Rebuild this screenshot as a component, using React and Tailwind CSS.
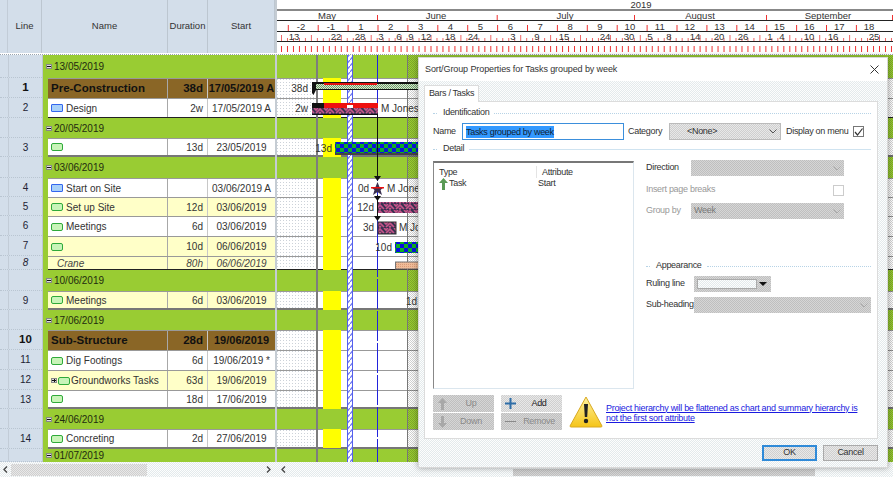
const dither = 'bg-[conic-gradient(#cfcfcf_25%,#e8e8e8_0_50%,#cfcfcf_0_75%,#e8e8e8_0)] bg-[length:2px_2px]';
const ditherLight = 'bg-[conic-gradient(#e3eaec_25%,#fdfdfd_0_50%,#e3eaec_0_75%,#fdfdfd_0)] bg-[length:2px_2px]';
const ditherDark = 'bg-[conic-gradient(#bfbfbf_25%,#d6d6d6_0_50%,#bfbfbf_0_75%,#d6d6d6_0)] bg-[length:2px_2px]';
const dots = 'bg-[conic-gradient(at_1px_1px,transparent_75%,#ccd2d9_0)] bg-[length:3px_3px]';

const rows = [
  { group: '13/05/2019', h: 'h-[23px]' },
  { n: 1, name: 'Pre-Construction', dur: '38d', start: '17/05/2019 A', kind: 'summary', h: 'h-[20px]' },
  { n: 2, name: 'Design', icon: 'blue', dur: '2w', start: '17/05/2019 A', h: 'h-[20px]', end: 'dark' },
  { group: '20/05/2019', h: 'h-[20px]' },
  { n: 3, icon: 'green', dur: '13d', start: '23/05/2019', h: 'h-[19px]', end: 'gray' },
  { group: '03/06/2019', h: 'h-[21px]' },
  { n: 4, name: 'Start on Site', icon: 'blue', dur: '', start: '03/06/2019 A', h: 'h-[19px]' },
  { n: 5, name: 'Set up Site', icon: 'green', dur: '12d', start: '03/06/2019', kind: 'yellow', h: 'h-[19px]' },
  { n: 6, name: 'Meetings', icon: 'green', dur: '6d', start: '03/06/2019', h: 'h-[20px]' },
  { n: 7, icon: 'green', dur: '10d', start: '06/06/2019', kind: 'yellow', h: 'h-[20px]' },
  { n: 8, name: 'Crane', dur: '80h', start: '06/06/2019', kind: 'resource', h: 'h-[14px]', end: 'dark' },
  { group: '10/06/2019', h: 'h-[21px]' },
  { n: 9, name: 'Meetings', icon: 'green', dur: '6d', start: '03/06/2019', kind: 'yellow', h: 'h-[19px]', end: 'gray' },
  { group: '17/06/2019', h: 'h-[20px]' },
  { n: 10, name: 'Sub-Structure', dur: '28d', start: '19/06/2019', kind: 'summary', h: 'h-[20px]' },
  { n: 11, name: 'Dig Footings', icon: 'green', dur: '6d', start: '19/06/2019 *', h: 'h-[20px]' },
  { n: 12, name: 'Groundworks Tasks', icon: 'green', expand: true, dur: '63d', start: '19/06/2019', kind: 'yellow', h: 'h-[20px]' },
  { n: 13, icon: 'green', dur: '18d', start: '17/06/2019', h: 'h-[19px]', end: 'gray' },
  { group: '24/06/2019', h: 'h-[20px]' },
  { n: 14, name: 'Concreting', icon: 'green', dur: '2d', start: '27/06/2019', h: 'h-[20px]', end: 'gray' },
  { group: '01/07/2019', h: 'h-[13px]' },
];

const rowEnd = {
  dark: 'border-b border-b-[#222]',
  gray: 'border-b-2 border-b-[#777]',
};

const rowBg = {
  summary: 'bg-[#8a6626] font-bold text-[#111]',
  yellow: 'bg-[#ffffc8] text-[#333]',
  resource: 'bg-[#ffffc8] italic text-[#444]',
};

const months = [['May', 327], ['June', 436], ['July', 565], ['August', 700], ['September', 828]];
const monthTicks = [377, 496.7, 634, 766, 892];
const weeks = ['-2', '-1', '1', '2', '3', '4', '5', '6', '7', '8', '9', '10', '11', '12', '13', '14', '15', '16', '17', '18'];
const days = [
  ['13', 294], ['22', 336], ['28', 360], ['3', 381], ['6', 399], ['9', 411], ['12', 426], ['18', 450], ['24', 473],
  ['3', 513], ['9', 537], ['15', 564], ['24', 605], ['30', 629], ['5', 650], ['8', 669], ['14', 695], ['20', 719],
  ['26', 743], ['1', 770], ['4', 782], ['10', 809], ['16', 833], ['25', 874],
];
const fine = Array.from({ length: 103 }, (_, i) => 281 + i * 5.98);

const TaskIcon = ({ color }) => (
  <span className={color === 'blue'
    ? 'w-[12px] h-[8px] shrink-0 rounded-[1px] border border-[#3366ee] bg-[#a8d0f8]'
    : 'w-[12px] h-[8px] shrink-0 rounded-[2px] border border-[#2faa3a] bg-[#c8f4b8]'} />
);

const Box = ({ plus }) => (
  <span className="relative w-[6px] h-[5px] shrink-0 border border-[#888] bg-[#ddd]">
    <span className="absolute left-0 top-[1px] w-[4px] h-[1px] bg-[#111]" />
    {plus && <span className="absolute left-[1.5px] top-0 w-[1px] h-[3px] bg-[#111]" />}
  </span>
);

const Row = ({ row }) => {
  const end = rowEnd[row.end] || '';
  const selector = 'flex w-[42px] shrink-0 pl-[8px] bg-[#d3deea] border-b border-dotted border-b-[#b9c5d1]';
  if (row.group) {
    return (
      <div className={`flex ${row.h} overflow-hidden`}>
        <div className={selector}><div className="flex-1 border-l border-l-[#c2ccd7]" /></div>
        <div className="w-[1px] bg-[#bcc6d0]" />
        <div className="flex items-center gap-[2px] w-[232px] pl-[3px] bg-[#99cc33] text-[10px] text-[#1f2a10]">
          <Box />
          <span>{row.group}</span>
        </div>
        <div className="w-[2px] bg-[#c5ccd3]" />
        <div className="flex-1 bg-[#99cc33]" />
      </div>
    );
  }
  const bg = rowBg[row.kind] || 'bg-white text-[#333]';
  const big = row.kind === 'summary';
  return (
    <div className={`flex ${row.h}`}>
      <div className={selector}>
        <div className={big
          ? 'flex-1 flex items-center justify-center border-l border-l-[#c2ccd7] text-[11.5px] font-bold text-[#111]'
          : 'flex-1 flex items-center justify-center border-l border-l-[#c2ccd7] text-[10px] text-[#223]'}>
          {row.kind === 'resource' ? <i>{row.n}</i> : row.n}
        </div>
      </div>
      <div className="w-[1px] bg-[#bcc6d0]" />
      <div className="w-[232px] pl-[5px] bg-[#99cc33]">
        <div className={`flex h-full border-t border-t-[#999] ${end} ${bg} ${big ? 'text-[11.5px]' : 'text-[10px]'}`}>
          <div className={`flex items-center w-[120px] border-r border-r-[#a8a8a8] ${row.expand ? 'gap-[1px]' : 'gap-[3px]'} ${row.kind === 'resource' ? 'pl-[9px]' : 'pl-[3px]'}`}>
            {row.expand && <Box plus />}
            {row.icon && <TaskIcon color={row.icon} />}
            {row.name && <span className="whitespace-nowrap">{row.name}</span>}
          </div>
          <div className="flex items-center justify-end w-[40px] pr-[4px] border-r border-r-[#c8c8c8]">{row.dur}</div>
          <div className={`flex items-center justify-center flex-1 whitespace-nowrap ${big ? 'text-[11px]' : 'text-[10px]'}`}>{row.start}</div>
        </div>
      </div>
      <div className="w-[2px] bg-[#c5ccd3]" />
      <div className={`flex flex-1 border-t border-t-[#999] bg-white ${end}`}>
        <div className={`w-[38px] ${dots}`} />
      </div>
    </div>
  );
};

const HeaderCell = ({ label, className }) => (
  <div className={`flex items-center justify-center h-full border-r border-r-[#bcc6d0] ${className}`}>{label}</div>
);

const Timeline = () => (
  <svg className="flex-1 h-[53px] bg-white" viewBox="277 0 616 53" fill="#333" fontSize="9.5">
    <text x="641" y="8" textAnchor="middle">2019</text>
    <rect x="277" y="9" width="616" height="2" fill="#888" />
    {months.map(([m, x]) => <text key={m} x={x} y="19" textAnchor="middle">{m}</text>)}
    {monthTicks.map((x) => <rect key={x} x={x} y="15" width="1" height="5" fill="#e33" />)}
    <rect x="277" y="20" width="616" height="1" fill="#222" />
    {weeks.map((w, i) => (
      <g key={w}>
        <text x={301 + i * 29.9} y="30" textAnchor="middle">{w}</text>
        <rect x={287.8 + i * 29.9} y="25" width="1" height="6" fill="#e33" />
      </g>
    ))}
    <rect x="277" y="31" width="616" height="1" fill="#222" />
    {fine.map((x, i) => <rect key={x} x={x} y={i % 5 === 0 ? 35 : 38} width="1" height={i % 5 === 0 ? 6 : 3} fill="#e66" />)}
    {days.map(([d, x]) => <text key={x} x={x} y="40" textAnchor="middle">{d}</text>)}
    <rect x="277" y="41" width="616" height="1" fill="#222" />
    {fine.map((x) => <rect key={x} x={x} y="46" width="1" height="6" fill="#e33" />)}
  </svg>
);

const GanttOverlay = () => (
  <svg className="absolute left-[277px] top-[55px] w-[616px] h-[407px] pointer-events-none" viewBox="277 55 616 407" fontSize="10" fill="#333">
    <defs>
      <pattern id="weave" width="10" height="6" patternUnits="userSpaceOnUse">
        <rect width="10" height="6" fill="#3a3050" />
        <path d="M-1 0 L4 5 M6 5 L11 0 M-1 6 L1 4 M9 4 L11 6 M4 0 L6 2 L8 0" stroke="#c8558a" strokeWidth="1.7" fill="none" />
      </pattern>
      <pattern id="check" width="8" height="8" patternUnits="userSpaceOnUse">
        <rect width="8" height="8" fill="#0a10e0" />
        <rect width="4" height="4" fill="#10b020" />
        <rect x="4" y="4" width="4" height="4" fill="#10b020" />
      </pattern>
      <pattern id="hatch" width="5" height="6" patternUnits="userSpaceOnUse">
        <rect width="5" height="6" fill="#fff" />
        <path d="M0 6 L5 0" stroke="#6a74f0" strokeWidth="1.2" />
      </pattern>
      <pattern id="shade" width="2" height="2" patternUnits="userSpaceOnUse">
        <rect width="1" height="1" fill="#000" fillOpacity="0.18" />
        <rect x="1" y="1" width="1" height="1" fill="#000" fillOpacity="0.18" />
      </pattern>
      <pattern id="mossy" width="2" height="2" patternUnits="userSpaceOnUse">
        <rect width="2" height="2" fill="#d8e8d0" />
        <rect width="1" height="1" fill="#6f9a6a" />
        <rect x="1" y="1" width="1" height="1" fill="#6f9a6a" />
      </pattern>
      <pattern id="salmon" width="2" height="2" patternUnits="userSpaceOnUse">
        <rect width="2" height="2" fill="#f0bc98" />
        <rect width="1" height="1" fill="#d89a78" />
      </pattern>
    </defs>

    <rect x="316" y="55" width="2" height="407" fill="#7d7d7d" />
    {[[78, 40], [138, 19], [178, 92], [291, 19], [330, 79], [429, 19]].map(([y, h]) => (
      <rect key={y} x="323" y={y} width="18" height={h} fill="#ffff00" />
    ))}
    <rect x="347.5" y="55" width="5" height="407" fill="url(#hatch)" />
    <rect x="347" y="55" width="1" height="407" fill="#5560ee" />
    <rect x="352" y="55" width="1" height="407" fill="#5560ee" />
    <line x1="377.5" y1="55" x2="377.5" y2="462" stroke="#2222dd" strokeDasharray="30 2" />
    <rect x="407" y="55" width="1" height="407" fill="#777" />
    <rect x="408" y="55" width="10" height="407" fill="url(#shade)" />
    <rect x="888" y="55" width="5" height="407" fill="url(#shade)" />

    <text x="308" y="92" textAnchor="end">38d</text>
    <rect x="316" y="84" width="102" height="5" fill="url(#mossy)" />
    <rect x="312" y="82" width="106" height="2" fill="#111" />
    <rect x="316" y="89" width="102" height="1" fill="#111" />
    <path d="M312 82 H316 V90 L313.5 95 L312 93 Z" fill="#111" />
    <rect x="324" y="83" width="53" height="2" fill="#e41010" />

    <text x="308" y="112" textAnchor="end">2w</text>
    <rect x="312" y="103" width="66" height="12" fill="#111" />
    <rect x="324" y="103" width="54" height="5" fill="#ee1010" />
    <rect x="312" y="108" width="66" height="7" fill="url(#weave)" />
    <rect x="312" y="114" width="66" height="1" fill="#111" />
    <rect x="347" y="105" width="6" height="3" fill="#fff" />
    <text x="381" y="112">M Jones</text>

    <text x="332" y="152" textAnchor="end">13d</text>
    <rect x="335" y="142" width="83" height="11" fill="url(#check)" />
    <rect x="335" y="153" width="83" height="2" fill="#444" />

    <path d="M377.5 115 V176" stroke="#111" />
    <path d="M374 176 H381 L377.5 181 Z" fill="#111" />
    <text x="369" y="192" textAnchor="end">0d</text>
    <path d="M377.5 182 L379.5 187 H384 L380.5 190 L382 195 L377.5 192 L373 195 L374.5 190 L371 187 H375.5 Z" fill="#3a3050" />
    <rect x="371" y="187" width="13" height="1.5" fill="#ee1010" />
    <text x="387" y="192">M Jones</text>
    <path d="M377.5 195 V216" stroke="#111" />
    <path d="M374 196 H381 L377.5 201 Z" fill="#111" />
    <path d="M374 216 H381 L377.5 221 Z" fill="#111" />

    <text x="374" y="211" textAnchor="end">12d</text>
    <rect x="378" y="202" width="40" height="11" fill="url(#weave)" />
    <text x="374" y="231" textAnchor="end">3d</text>
    <rect x="378" y="222" width="18" height="12" fill="url(#weave)" stroke="#333" />
    <text x="399" y="231">M Jo</text>
    <text x="392" y="251" textAnchor="end">10d</text>
    <rect x="395" y="242" width="23" height="11" fill="url(#check)" />
    <rect x="395.5" y="262" width="24" height="7" fill="url(#salmon)" stroke="#777" />
    <text x="417" y="305" textAnchor="end">1d</text>
  </svg>
);

const Heading = ({ label, solid, className }) => (
  <div className={`flex items-center gap-[5px] h-[12px] ${className}`}>
    <span className="w-[4px] border-t border-dotted border-t-[#b7d3e6]" />
    <span className="pl-[1px] text-[#333]">{label}</span>
    <span className={solid ? 'flex-1 border-t border-t-[#cfe3f0]' : 'flex-1 border-t border-dotted border-t-[#b7d3e6]'} />
  </div>
);

const Chevron = ({ dark }) => (
  <svg className="w-[8px] h-[5px]" viewBox="0 0 8 5" fill="none" stroke={dark ? '#555' : '#a8a8a8'}>
    <path d="M0.5 0.5 L4 4 L7.5 0.5" />
  </svg>
);

const DisabledSelect = ({ className, label }) => (
  <div className={`flex items-center justify-between h-[16px] pl-[3px] pr-[3px] ${ditherDark} ${className}`}>
    <span className="text-[#777]">{label}</span>
    <Chevron />
  </div>
);

const SmallButton = ({ label, icon, active }) => (
  <div className={`flex items-center w-[61px] h-[17px] pl-[3px] ${active ? dither : ditherDark}`}>
    <span className="flex items-center justify-center w-[12px]">{icon}</span>
    <span className={`flex-1 text-center ${active ? 'text-[#222]' : 'text-[#8a8a8a]'}`}>{label}</span>
  </div>
);

const Arrow = ({ up, color }) => (
  <svg className="w-[9px] h-[12px] shrink-0" viewBox="0 0 9 12" fill={color}>
    <path d={up ? 'M4.5 0 L9 5 H6 V12 H3 V5 H0 Z' : 'M4.5 12 L9 7 H6 V0 H3 V7 H0 Z'} />
  </svg>
);

const Dialog = () => (
  <div className="absolute left-[418px] top-[57px] flex flex-col w-[470px] h-[411px] bg-white border border-[#d8d8d8] shadow-[0_0_6px_rgba(0,0,0,0.35)] text-[9px] tracking-[-0.3px] text-[#333]">
    <div className="flex items-center justify-between h-[23px] shrink-0 pl-[6px] pr-[8px] text-[#333] tracking-[-0.1px]">
      <span>Sort/Group Properties for Tasks grouped by week</span>
      <svg className="w-[9px] h-[9px]" viewBox="0 0 9 9" stroke="#333"><path d="M0.5 0.5 L8.5 8.5 M8.5 0.5 L0.5 8.5" /></svg>
    </div>
    <div className={`flex-1 flex flex-col pl-[5px] pr-[9px] pt-[4px] ${ditherLight}`}>
      <div className="flex items-center justify-center w-[55px] h-[17px] -mb-[1px] z-10 whitespace-nowrap bg-white border border-[#dcdcdc] border-b-0">Bars / Tasks</div>
      <div className="flex flex-col h-[338px] bg-white border border-[#dcdcdc] pl-[8px] pr-[6px] pt-[5px]">
        <Heading label="Identification" />
        <div className="flex items-center h-[17px] mt-[4px]">
          <span className="w-[29px]">Name</span>
          <div className="flex items-center w-[162px] h-[17px] pl-[3px] bg-white border border-[#3b8fdc]">
            <span className="bg-[#3399ff] text-[#123] leading-[12px]">Tasks grouped by week</span>
          </div>
          <span className="ml-[4px] w-[41px]">Category</span>
          <div className={`flex items-center justify-between w-[112px] h-[17px] pl-[17px] pr-[3px] border border-[#bbb] ${dither}`}>
            <span>&lt;None&gt;</span>
            <Chevron dark />
          </div>
          <span className="ml-[5px] w-[67px] whitespace-nowrap">Display on menu</span>
          <div className="flex items-center justify-center w-[11px] h-[11px] border border-[#777] bg-white">
            <svg className="w-[9px] h-[8px]" viewBox="0 0 9 8" fill="none" stroke="#333" strokeWidth="1.2"><path d="M1 4 L3.5 7 L8.5 0.5" /></svg>
          </div>
        </div>
        <Heading label="Detail" solid className="mt-[3px]" />
        <div className="flex h-[228px] mt-[6px]">
          <div className="w-[201px] h-full shrink-0 border-t-2 border-t-[#777] border-l border-l-[#888] border-r border-r-[#dbe6ee] border-b border-b-[#dbe6ee] pl-[5px] pt-[3px]">
            <div className="flex h-[12px]">
              <span className="w-[97px]">Type</span>
              <span className="border-l border-l-[#e4e4e4] pl-[5px]">Attribute</span>
            </div>
            <div className="flex items-center h-[12px]">
              <Arrow up color="#5a9a55" />
              <span className="w-[90px] pl-[1px]">Task</span>
              <span>Start</span>
            </div>
          </div>
          <div className="flex-1 flex flex-col pl-[12px]">
            <div className="flex items-center h-[16px] -mt-[1px]">
              <span className="w-[45px]">Direction</span>
              <DisabledSelect className="w-[153px]" />
            </div>
            <div className="flex items-center justify-between w-[198px] h-[12px] mt-[8px] text-[#999]">
              <span>Insert page breaks</span>
              <span className="w-[11px] h-[11px] border border-[#ccc] bg-white" />
            </div>
            <div className="flex items-center h-[16px] mt-[7px]">
              <span className="w-[45px] text-[#999]">Group by</span>
              <DisabledSelect className="w-[153px]" label="Week" />
            </div>
            <Heading label="Appearance" className="mt-[41px]" />
            <div className="flex items-center h-[16px] mt-[4px]">
              <span className="w-[48px]">Ruling line</span>
              <div className={`flex items-center w-[77px] h-[16px] pl-[3px] ${ditherDark}`}>
                <span className={`w-[60px] h-[10px] border border-[#aaa] ${ditherLight}`} />
                <span className="ml-[2px] w-0 h-0 border-l-[4px] border-r-[4px] border-t-[4px] border-l-transparent border-r-transparent border-t-[#111]" />
              </div>
            </div>
            <div className="flex items-center h-[16px] mt-[5px]">
              <span className="w-[48px] whitespace-nowrap">Sub-heading</span>
              <DisabledSelect className="w-[177px]" />
            </div>
          </div>
        </div>
        <div className="flex mt-[6px]">
          <div className="grid grid-cols-[61px_61px] gap-x-[7px] gap-y-[1px]">
            <SmallButton label="Up" icon={<Arrow up color="#a8a8a8" />} />
            <SmallButton label="Add" active icon={<svg className="w-[11px] h-[11px]" viewBox="0 0 11 11" fill="#2f6ea8"><path d="M4.5 0 H6.5 V4.5 H11 V6.5 H6.5 V11 H4.5 V6.5 H0 V4.5 H4.5 Z" /></svg>} />
            <SmallButton label="Down" icon={<Arrow color="#a8a8a8" />} />
            <SmallButton label="Remove" icon={<span className="w-[11px] h-[1px] bg-[#8a8a8a]" />} />
          </div>
          <svg className="w-[34px] h-[32px] shrink-0 ml-[7px] mt-[1px]" viewBox="0 0 34 32">
            <defs>
              <linearGradient id="warn" x1="0" y1="0" x2="0" y2="1">
                <stop offset="0" stopColor="#fff2a0" />
                <stop offset="1" stopColor="#f5c518" />
              </linearGradient>
            </defs>
            <path d="M17 1 L33 30 Q33 31 32 31 H2 Q1 31 1 30 Z" fill="url(#warn)" stroke="#d8a820" />
            <path d="M15 8 H19 L18.2 21 H15.8 Z" fill="#222" />
            <circle cx="17" cy="25" r="2.2" fill="#222" />
          </svg>
          <div className="flex flex-col justify-center ml-[3px] text-[#1a1ae0] underline leading-[10px]">
            <span className="whitespace-nowrap">Project hierarchy will be flattened as chart and summary hierarchy is</span>
            <span>not the first sort attribute</span>
          </div>
        </div>
      </div>
      <div className="flex justify-end gap-[6px] mt-[6px]">
        <div className={`flex items-center justify-center w-[55px] h-[16px] border-2 border-[#2f8ad8] ${dither}`}>OK</div>
        <div className={`flex items-center justify-center w-[55px] h-[16px] border border-[#aaa] ${dither}`}>Cancel</div>
      </div>
    </div>
  </div>
);

const Caret = ({ right }) => (
  <svg className="w-[5px] h-[7px]" viewBox="0 0 5 7" fill="none" stroke="#444" strokeWidth="1.3">
    <path d={right ? 'M1 0.5 L4 3.5 L1 6.5' : 'M4 0.5 L1 3.5 L4 6.5'} />
  </svg>
);

export default function App() {
  return (
    <div className="relative flex flex-col w-[893px] h-[477px] overflow-hidden bg-white text-[10px] text-[#333] font-['Liberation_Sans',Arial,sans-serif]">
      <div className="flex h-[53px] bg-[#d3deea] text-[9.5px] text-[#333]">
        <div className="w-[8px] h-full border-r border-r-[#c2ccd7]" />
        <HeaderCell label="Line" className="w-[34px]" />
        <HeaderCell label="Name" className="w-[126px]" />
        <HeaderCell label="Duration" className="w-[40px]" />
        <HeaderCell label="Start" className="w-[67px]" />
        <div className="w-[2px] bg-[#c5ccd3]" />
        <Timeline />
      </div>
      <div className="h-[2px] border-b border-dotted border-b-[#9aa4ae]" />
      {rows.map((row, i) => <Row key={i} row={row} />)}
      <div className={`flex items-center h-[15px] ${ditherLight}`}>
        <div className="flex items-center justify-between w-[275px] pl-[3px] pr-[4px]">
          <Caret />
          <div className={`w-[136px] h-[12px] -ml-[117px] ${dither}`} />
          <Caret right />
        </div>
        <div className="w-[6px]" />
        <Caret />
        <div className={`ml-[227px] w-[302px] h-[7px] mt-[6px] ${ditherDark}`} />
      </div>
      <GanttOverlay />
      <Dialog />
    </div>
  );
}
